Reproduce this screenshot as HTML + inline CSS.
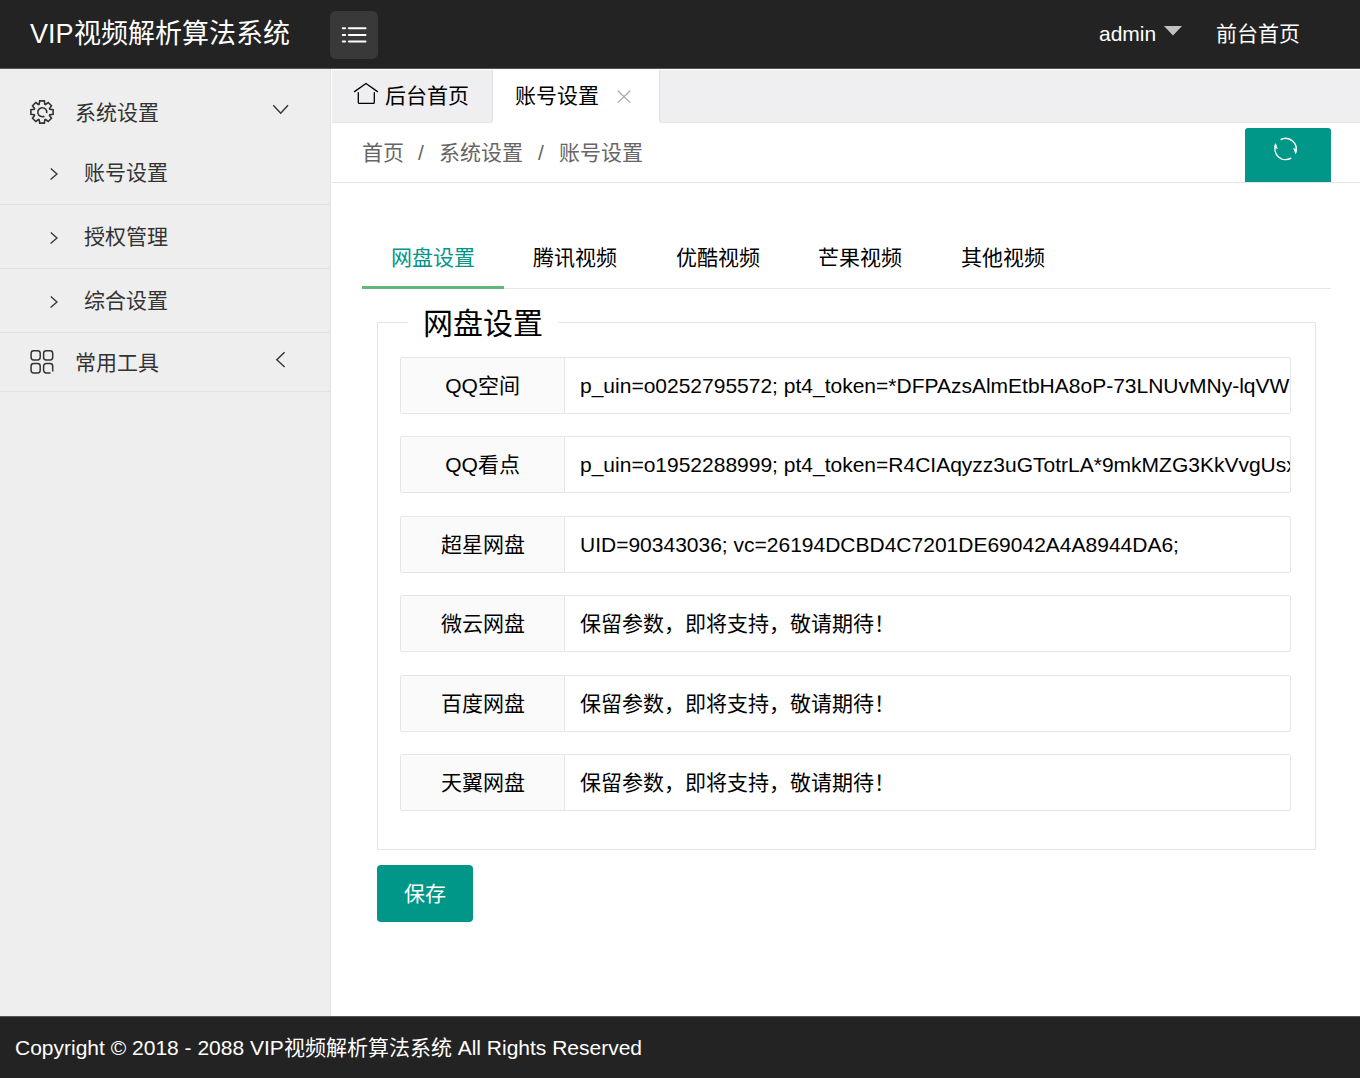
<!DOCTYPE html>
<html lang="zh-CN">
<head>
<meta charset="utf-8">
<style>
*{margin:0;padding:0;box-sizing:border-box;}
html,body{width:1360px;height:1078px;overflow:hidden;background:#fff;}
body{font-family:"Liberation Sans",sans-serif;color:#000;position:relative;}
.abs{position:absolute;white-space:nowrap;}
svg.abs{overflow:visible;}
.header{position:absolute;left:0;top:0;width:1360px;height:68px;background:#232323;}
.hedge{position:absolute;left:0;top:68px;width:1360px;height:1px;background:#555;}
.fedge{position:absolute;left:0;top:1016px;width:1360px;height:1px;background:#555;}
.title{position:absolute;left:30px;top:16px;font-size:27px;line-height:36px;color:#fff;white-space:nowrap;}
.menubtn{position:absolute;left:330px;top:11px;width:48px;height:48px;background:#393939;border-radius:6px;}
.hdr-r{position:absolute;top:19px;font-size:21px;line-height:30px;color:#fff;white-space:nowrap;}
.side{position:absolute;left:0;top:69px;width:331px;height:947px;background:#eeeeee;border-right:1px solid #e2e2e2;}
.sline{position:absolute;left:0;width:330px;height:1px;background:#e2e2e2;}
.stext{position:absolute;font-size:21px;line-height:30px;color:#333;white-space:nowrap;}
.tabbar{position:absolute;left:331px;top:69px;width:1029px;height:54px;}
.tabA{position:absolute;left:332px;top:70px;width:161px;height:53px;background:#efeff1;border-right:1px solid #e2e2e2;border-bottom:1px solid #e2e2e2;border-bottom-right-radius:3px;}
.tabB{position:absolute;left:659px;top:70px;width:701px;height:53px;background:#efeff1;border-left:1px solid #e2e2e2;border-bottom:1px solid #e2e2e2;border-bottom-left-radius:3px;}
.tab{position:absolute;top:0;height:54px;font-size:21px;line-height:54px;color:#000;white-space:nowrap;}
.crumb{position:absolute;left:332px;top:123px;width:1029px;height:60px;border-bottom:1px solid #e6e6e6;}
.refresh{position:absolute;left:1245px;top:128px;width:86px;height:54px;background:#009688;border-radius:3px 3px 0 0;}
.ctab{position:absolute;top:240px;font-size:21px;line-height:36px;color:#000;white-space:nowrap;}
.fieldset{position:absolute;left:377px;top:322px;width:939px;height:528px;border:1px solid #e6e6e6;}
.legend{position:absolute;left:408px;top:303px;width:150px;padding-left:15px;background:#fff;font-size:30px;line-height:42px;color:#000;white-space:nowrap;}
.row{position:absolute;left:400px;width:891px;height:57px;border:1px solid #e6e6e6;border-radius:2px;background:#fff;}
.lab{position:absolute;left:0;top:0;width:164px;height:55px;background:#fafafa;border-right:1px solid #e6e6e6;text-align:center;font-size:21px;line-height:55px;color:#000;}
.val{position:absolute;left:179px;top:0;width:710px;height:55px;overflow:hidden;font-size:21px;line-height:55px;color:#000;white-space:nowrap;}
.save{position:absolute;left:377px;top:865px;width:96px;height:57px;background:#009688;border-radius:4px;color:#fff;font-size:21px;line-height:57px;text-align:center;}
.footer{position:absolute;left:0;top:1017px;width:1360px;height:61px;background:#232323;}
.foot{position:absolute;left:15px;top:17px;font-size:21px;line-height:28px;color:#fff;white-space:nowrap;}
</style>
</head>
<body>
<div class="header">
  <div class="title">VIP视频解析算法系统</div>
  <div class="menubtn">
    <svg width="48" height="48" viewBox="0 0 48 48" style="position:absolute;left:0;top:0">
      <g stroke="#fff" stroke-width="2" stroke-linecap="round">
        <line x1="12.8" y1="17.3" x2="15.1" y2="17.3"/><line x1="18.8" y1="17.3" x2="35.5" y2="17.3"/>
        <line x1="12.8" y1="23.9" x2="15.1" y2="23.9"/><line x1="18.8" y1="23.9" x2="35.5" y2="23.9"/>
        <line x1="12.8" y1="30.6" x2="15.1" y2="30.6"/><line x1="18.8" y1="30.6" x2="35.5" y2="30.6"/>
      </g>
    </svg>
  </div>
  <div class="hdr-r" style="left:1099px;">admin</div>
  <svg class="abs" style="left:1164px;top:26px" width="18" height="10" viewBox="0 0 18 10"><path d="M0 0 L18 0 L9 9.5 Z" fill="#c2c2c2"/></svg>
  <div class="hdr-r" style="left:1216px;">前台首页</div>
</div>

<div class="hedge"></div>
<div class="side">
  <svg class="abs" style="left:30px;top:30.5px" width="24" height="24" viewBox="0 0 24 24"><path d="M9.18 4.19 L9.70 0.89 L14.30 0.89 L14.82 4.19 L15.52 4.49 L18.23 2.51 L21.49 5.77 L19.51 8.48 L19.81 9.18 L23.11 9.70 L23.11 14.30 L19.81 14.82 L19.51 15.52 L21.49 18.23 L18.23 21.49 L15.52 19.51 L14.82 19.81 L14.30 23.11 L9.70 23.11 L9.18 19.81 L8.48 19.51 L5.77 21.49 L2.51 18.23 L4.49 15.52 L4.19 14.82 L0.89 14.30 L0.89 9.70 L4.19 9.18 L4.49 8.48 L2.51 5.77 L5.77 2.51 L8.48 4.49 Z" fill="none" stroke="#333" stroke-width="1.6" stroke-linejoin="miter"/><path d="M16.7 13.14 A4.5 4.5 0 1 0 14.41 16.17" fill="none" stroke="#333" stroke-width="1.6"/></svg>
  <div class="stext" style="left:75px;top:29px;">系统设置</div>
  <svg class="abs" style="left:262px;top:21px" width="40" height="40" viewBox="262 90 40 40"><path d="M273.3 105.3 L280.7 113.2 L288 105.3" fill="none" stroke="#333" stroke-width="1.4"/></svg>
  <svg class="abs" style="left:40px;top:91px" width="30" height="30" viewBox="40 160 30 30"><path d="M50.8 168.4 L57 174 L50.6 179.5" fill="none" stroke="#333" stroke-width="1.3"/></svg>
  <div class="stext" style="left:84px;top:89px;">账号设置</div>
  <svg class="abs" style="left:40px;top:155px" width="30" height="30" viewBox="40 224 30 30"><path d="M50.8 232.4 L57 238 L50.6 243.5" fill="none" stroke="#333" stroke-width="1.3"/></svg>
  <div class="stext" style="left:84px;top:153px;">授权管理</div>
  <svg class="abs" style="left:40px;top:219px" width="30" height="30" viewBox="40 288 30 30"><path d="M50.8 296.4 L57 302 L50.6 307.5" fill="none" stroke="#333" stroke-width="1.3"/></svg>
  <div class="stext" style="left:84px;top:217px;">综合设置</div>
  <div class="sline" style="top:135px"></div>
  <div class="sline" style="top:199px"></div>
  <div class="sline" style="top:263px"></div>
  <svg class="abs" style="left:26px;top:277px" width="32" height="32" viewBox="26 346 32 32"><g fill="none" stroke="#333" stroke-width="1.5"><rect x="31.1" y="350.7" width="9.1" height="9.2" rx="2.6"/><rect x="43.6" y="350.7" width="9.1" height="9.2" rx="2.6"/><rect x="31.1" y="363.6" width="9.1" height="9.3" rx="2.6"/><path d="M52.7 371.5 L52.7 366.2 A2.6 2.6 0 0 0 50.1 363.6 L46.2 363.6 A2.6 2.6 0 0 0 43.6 366.2 L43.6 370.3 A2.6 2.6 0 0 0 46.2 372.9 L50.5 372.9"/></g></svg>
  <div class="stext" style="left:75px;top:279px;">常用工具</div>
  <svg class="abs" style="left:262px;top:271px" width="40" height="40" viewBox="262 340 40 40"><path d="M284.6 352.2 L276.8 359.8 L284.6 367.1" fill="none" stroke="#333" stroke-width="1.4"/></svg>
  <div class="sline" style="top:322px"></div>
</div>

<div class="tabA"></div>
<div class="tabB"></div>
<div class="tabbar">
  <svg class="abs" style="left:19px;top:11px" width="32" height="28" viewBox="350 80 32 28"><g fill="none" stroke="#000" stroke-width="1.3" stroke-linecap="round" stroke-linejoin="round"><path d="M354.5 91.6 L366 83.5 L377.5 91.6"/><path d="M358.3 92.6 L358.3 102.2 Q358.3 103.4 359.5 103.4 L373.1 103.4 Q374.3 103.4 374.3 102.2 L374.3 92.6"/></g></svg>
  <div class="tab" style="left:54px;">后台首页</div>
  <div class="tab" style="left:184px;">账号设置</div>
  <svg class="abs" style="left:274px;top:6px" width="40" height="40" viewBox="605 75 40 40"><g stroke="#a6a6a6" stroke-width="1.2"><line x1="617.8" y1="90.8" x2="630.2" y2="102.6"/><line x1="630.2" y1="90.8" x2="617.8" y2="102.6"/></g></svg>
</div>

<div class="crumb">
  <div class="abs" style="left:30px;top:15px;font-size:21px;line-height:30px;color:#666;">首页</div>
  <div class="abs" style="left:86px;top:15px;font-size:21px;line-height:30px;color:#666;">/</div>
  <div class="abs" style="left:107px;top:15px;font-size:21px;line-height:30px;color:#666;">系统设置</div>
  <div class="abs" style="left:206px;top:15px;font-size:21px;line-height:30px;color:#666;">/</div>
  <div class="abs" style="left:227px;top:15px;font-size:21px;line-height:30px;color:#666;">账号设置</div>
</div>
<div class="refresh">
  <svg width="86" height="54" viewBox="1245 128 86 54" style="position:absolute;left:0;top:0"><g fill="none" stroke="#fff" stroke-width="1.5"><path d="M1280.62 139.64 A10.6 10.6 0 0 1 1295.56 152.63"/><path d="M1291.22 157.99 A10.6 10.6 0 0 1 1275.99 144.52"/></g><g fill="#fff"><path d="M1293.1 148.1 L1296.9 149.6 L1295.8 154.6 Z"/><path d="M1275.3 143.1 L1277.9 149.3 L1273.9 147.0 Z"/></g></svg>
</div>

<div class="ctab" style="left:391px;color:#009688;">网盘设置</div>
<div class="ctab" style="left:533px;">腾讯视频</div>
<div class="ctab" style="left:676px;">优酷视频</div>
<div class="ctab" style="left:818px;">芒果视频</div>
<div class="ctab" style="left:961px;">其他视频</div>
<div class="abs" style="left:362px;top:288px;width:969px;height:1px;background:#e6e6e6;"></div>
<div class="abs" style="left:362px;top:286px;width:142px;height:3px;background:#5FB878;"></div>

<div class="fieldset"></div>
<div class="legend">网盘设置</div>

<div class="row" style="top:357px"><div class="lab">QQ空间</div><div class="val">p_uin=o0252795572; pt4_token=*DFPAzsAlmEtbHA8oP-73LNUvMNy-lqVWs</div></div>
<div class="row" style="top:436px"><div class="lab">QQ看点</div><div class="val">p_uin=o1952288999; pt4_token=R4CIAqyzz3uGTotrLA*9mkMZG3KkVvgUsx</div></div>
<div class="row" style="top:516px"><div class="lab">超星网盘</div><div class="val">UID=90343036; vc=26194DCBD4C7201DE69042A4A8944DA6;</div></div>
<div class="row" style="top:595px"><div class="lab">微云网盘</div><div class="val">保留参数，即将支持，敬请期待！</div></div>
<div class="row" style="top:675px"><div class="lab">百度网盘</div><div class="val">保留参数，即将支持，敬请期待！</div></div>
<div class="row" style="top:754px"><div class="lab">天翼网盘</div><div class="val">保留参数，即将支持，敬请期待！</div></div>

<div class="save">保存</div>

<div class="fedge"></div>
<div class="footer"><div class="foot">Copyright © 2018 - 2088 VIP视频解析算法系统 All Rights Reserved</div></div>
</body>
</html>
